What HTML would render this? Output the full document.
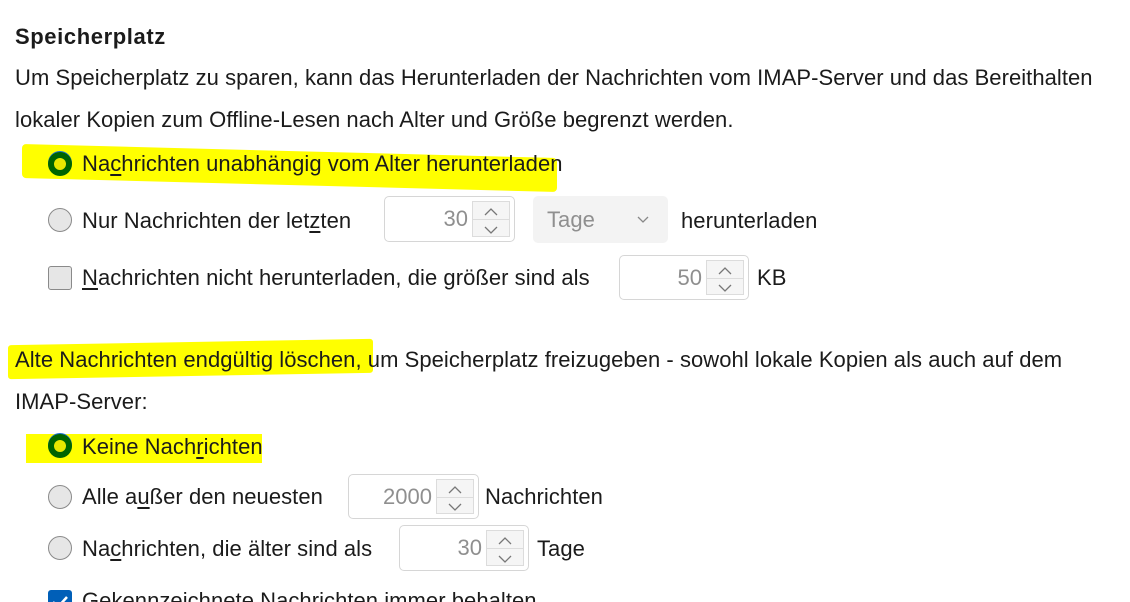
<!DOCTYPE html>
<html><head><meta charset="utf-8"><style>
html,body{margin:0;width:1130px;height:602px;overflow:hidden}
body{background:#fff;position:relative;font-family:"Liberation Sans",sans-serif;color:#1b1b1b}
.t{position:absolute;font-size:22px;line-height:26px;white-space:nowrap;letter-spacing:0.05px}
.hl{position:absolute;background:#ffff00}
.radio{position:absolute;width:22px;height:22px;border-radius:50%;border:1px solid #8a8a8a;background:#e6e6e6}
.rsel{position:absolute;width:24px;height:24px;border-radius:50%;background:#006400;box-shadow:0 -1px 0 #1a6fd0}
.rsel:after{content:"";position:absolute;left:6px;top:6px;width:12px;height:12px;border-radius:50%;background:#e8e800}
.cb{position:absolute;width:22px;height:22px;border:1px solid #8a8a8a;border-radius:3px;background:#e6e6e6}
.spin{position:absolute;border:1px solid #d6d6d6;border-radius:5px;background:#fff}
.spin .v{position:absolute;right:46px;top:50%;transform:translateY(-50%);font-size:22px;color:#8f8f8f}
.spin .s{position:absolute;right:4px;top:4px;bottom:4px;width:36px;border:1px solid #dcdcdc;background:#f5f5f5}
.spin .s:before{content:"";position:absolute;left:0;right:0;top:50%;border-top:1px solid #dcdcdc}
.spin svg{position:absolute;left:11px}
u{text-decoration:underline;text-underline-offset:3px}
</style></head><body>
<div class="t" style="left:15px;top:24px;font-weight:bold;font-size:22px;letter-spacing:0.6px">Speicherplatz</div>
<div class="t" style="left:15px;top:65px">Um Speicherplatz zu sparen, kann das Herunterladen der Nachrichten vom IMAP-Server und das Bereithalten</div>
<div class="t" style="left:15px;top:107px">lokaler Kopien zum Offline-Lesen nach Alter und Größe begrenzt werden.</div>

<div class="hl" style="left:22px;top:151px;width:535px;height:34px;transform:skewY(1.5deg);border-radius:4px"></div>
<div class="rsel" style="left:48px;top:152px"></div>
<div class="t" style="left:82px;top:151px">Na<u>c</u>hrichten unabhängig vom Alter herunterladen</div>

<div class="radio" style="left:48px;top:208px"></div>
<div class="t" style="left:82px;top:208px">Nur Nachrichten der let<u>z</u>ten</div>
<div class="spin" style="left:384px;top:196px;width:129px;height:44px"><span class="v">30</span><div class="s"><svg style="top:6px" width="14" height="8"><path d="M1 7 L7 1 L13 7" fill="none" stroke="#777" stroke-width="1.3"/></svg><svg style="top:24px" width="14" height="8"><path d="M1 1 L7 7 L13 1" fill="none" stroke="#777" stroke-width="1.3"/></svg></div></div>
<div style="position:absolute;left:533px;top:196px;width:135px;height:47px;background:#f3f3f3;border-radius:5px"><span class="t" style="left:14px;top:11px;color:#8f8f8f">Tage</span><svg style="position:absolute;left:104px;top:20px" width="12" height="7"><path d="M1 1 L6 6 L11 1" fill="none" stroke="#888" stroke-width="1.3"/></svg></div>
<div class="t" style="left:681px;top:208px">herunterladen</div>

<div class="cb" style="left:48px;top:266px"></div>
<div class="t" style="left:82px;top:265px"><u>N</u>achrichten nicht herunterladen, die größer sind als</div>
<div class="spin" style="left:619px;top:255px;width:128px;height:43px"><span class="v">50</span><div class="s"><svg style="top:6px" width="14" height="8"><path d="M1 7 L7 1 L13 7" fill="none" stroke="#777" stroke-width="1.3"/></svg><svg style="top:23px" width="14" height="8"><path d="M1 1 L7 7 L13 1" fill="none" stroke="#777" stroke-width="1.3"/></svg></div></div>
<div class="t" style="left:757px;top:265px">KB</div>

<div class="hl" style="left:8px;top:342px;width:365px;height:34px;border-radius:3px;transform:skewY(-1deg)"></div>
<div class="t" style="left:15px;top:347px">Alte Nachrichten endgültig löschen, um Speicherplatz freizugeben - sowohl lokale Kopien als auch auf dem</div>
<div class="t" style="left:15px;top:389px">IMAP-Server:</div>

<div class="hl" style="left:26px;top:434px;width:236px;height:29px"></div>
<div class="rsel" style="left:48px;top:434px"></div>
<div class="t" style="left:82px;top:434px">Keine Nach<u>r</u>ichten</div>

<div class="radio" style="left:48px;top:485px"></div>
<div class="t" style="left:82px;top:484px">Alle a<u>u</u>ßer den neuesten</div>
<div class="spin" style="left:348px;top:474px;width:129px;height:43px"><span class="v">2000</span><div class="s"><svg style="top:6px" width="14" height="8"><path d="M1 7 L7 1 L13 7" fill="none" stroke="#777" stroke-width="1.3"/></svg><svg style="top:23px" width="14" height="8"><path d="M1 1 L7 7 L13 1" fill="none" stroke="#777" stroke-width="1.3"/></svg></div></div>
<div class="t" style="left:485px;top:484px">Nachrichten</div>

<div class="radio" style="left:48px;top:536px"></div>
<div class="t" style="left:82px;top:536px">Na<u>c</u>hrichten, die älter sind als</div>
<div class="spin" style="left:399px;top:525px;width:128px;height:44px"><span class="v">30</span><div class="s"><svg style="top:6px" width="14" height="8"><path d="M1 7 L7 1 L13 7" fill="none" stroke="#777" stroke-width="1.3"/></svg><svg style="top:24px" width="14" height="8"><path d="M1 1 L7 7 L13 1" fill="none" stroke="#777" stroke-width="1.3"/></svg></div></div>
<div class="t" style="left:537px;top:536px">Tage</div>

<div style="position:absolute;left:48px;top:590px;width:24px;height:24px;border-radius:3px;background:#005fb8"><svg width="24" height="24"><path d="M5 12 L10 17 L19 7" fill="none" stroke="#fff" stroke-width="2.5"/></svg></div>
<div class="t" style="left:82px;top:588px">Gekennzeichnete Nachrichten immer behalten</div>
</body></html>
